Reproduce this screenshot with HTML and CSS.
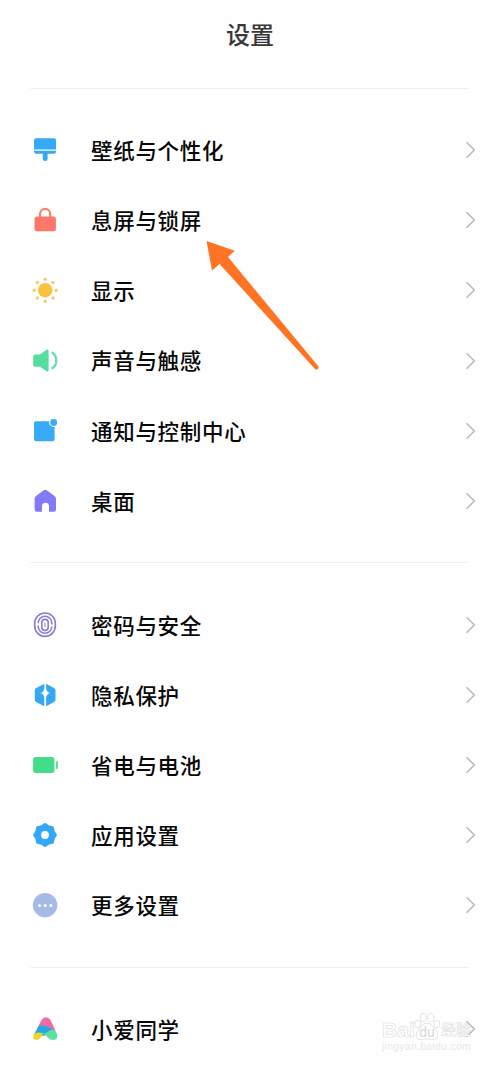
FILE: index.html
```html
<!DOCTYPE html>
<html lang="zh-CN">
<head>
<meta charset="utf-8">
<title>设置</title>
<link rel="stylesheet" href="styles.css">
</head>
<body>
<main class="screen">
  <header class="header"><h1 class="title">设置</h1></header>

  <section class="group">
    <div class="row">
      <svg class="icon" viewBox="0 0 30 30" fill="#35a9f5"><path d="M6 3.3H24Q26 3.3 26 5.3V14.4H4V5.3Q4 3.3 6 3.3Z"/><path d="M4 15.8H26V16.6Q26 18.8 23.8 18.8H17.6V24Q17.6 26 15.2 26T12.8 24V18.8H6.2Q4 18.8 4 16.6Z"/></svg>
      <span class="label">壁纸与个性化</span>
      <svg class="chevron" viewBox="0 0 12 18"><path d="M1.5 1.3L9.3 9L1.5 16.7"/></svg>
    </div>
    <div class="row">
      <svg class="icon" viewBox="0 0 30 30"><path d="M10 13V9.2a5.1 5.3 0 0 1 10.2 0V13" fill="none" stroke="#fb7d6b" stroke-width="2.2"/><rect x="4.5" y="11.4" width="21.4" height="14.8" rx="2.5" fill="#fb7768"/></svg>
      <span class="label">息屏与锁屏</span>
      <svg class="chevron" viewBox="0 0 12 18"><path d="M1.5 1.3L9.3 9L1.5 16.7"/></svg>
    </div>
    <div class="row">
      <svg class="icon" viewBox="0 0 30 30" fill="#fac23c"><circle cx="15.2" cy="15.2" r="7.2"/><g fill="#f5ca6c"><circle cx="15.2" cy="4.2" r="1.7"/><circle cx="15.2" cy="26.2" r="1.7"/><circle cx="4.2" cy="15.2" r="1.7"/><circle cx="26.2" cy="15.2" r="1.7"/><circle cx="7.4" cy="7.4" r="1.7"/><circle cx="23" cy="7.4" r="1.7"/><circle cx="7.4" cy="23" r="1.7"/><circle cx="23" cy="23" r="1.7"/></g></svg>
      <span class="label">显示</span>
      <svg class="chevron" viewBox="0 0 12 18"><path d="M1.5 1.3L9.3 9L1.5 16.7"/></svg>
    </div>
    <div class="row">
      <svg class="icon" viewBox="0 0 30 30"><path d="M5 8.4H10L16.5 3.8Q18.6 2.6 18.6 5V24Q18.6 26.5 16.5 25.2L10 20.8H5Q3.2 20.8 3.2 19V10.2Q3.2 8.4 5 8.4Z" fill="#56dba0"/><path d="M21.7 6.4Q26.3 8.9 26.3 14.5T21.7 22.6" fill="none" stroke="#6cdcaa" stroke-width="2.4"/></svg>
      <span class="label">声音与触感</span>
      <svg class="chevron" viewBox="0 0 12 18"><path d="M1.5 1.3L9.3 9L1.5 16.7"/></svg>
    </div>
    <div class="row">
      <svg class="icon" viewBox="0 0 30 30" fill="#38aaf7"><path d="M6 5.3H19.2A4.7 4.7 0 0 0 24.6 11V23Q24.6 25.2 22.4 25.2H6.2Q4 25.2 4 23V7.3Q4 5.3 6 5.3Z"/><circle cx="23.7" cy="6.5" r="3.4"/></svg>
      <span class="label">通知与控制中心</span>
      <svg class="chevron" viewBox="0 0 12 18"><path d="M1.5 1.3L9.3 9L1.5 16.7"/></svg>
    </div>
    <div class="row">
      <svg class="icon" viewBox="0 0 30 30"><path d="M13.6 4.3Q15.2 3.3 16.8 4.3L24.5 10Q26 11.2 26 13V23.6Q26 25.8 23.8 25.8H19V20.4A3.5 3.7 0 0 0 12 20.4V25.8H6.8Q4.6 25.8 4.6 23.6V13Q4.6 11.2 6 10Z" fill="#837bf5"/></svg>
      <span class="label">桌面</span>
      <svg class="chevron" viewBox="0 0 12 18"><path d="M1.5 1.3L9.3 9L1.5 16.7"/></svg>
    </div>
  </section>

  <section class="group group-second">
    <div class="row">
      <svg class="icon" viewBox="0 0 30 30" fill="none" stroke="#8780d0" stroke-width="1.6"><rect x="4.7" y="3" width="20.6" height="23.4" rx="10.3" stroke-width="1.7"/><path d="M8.2 13.3V13A6.8 6.8 0 0 1 21.8 13V14.5M8.2 15.4V16.4A6.8 6.8 0 0 0 21.8 16.4"/><rect x="11.8" y="9.4" width="6.4" height="11" rx="3.2"/><path d="M15 12.8V17" stroke-width="1"/></svg>
      <span class="label">密码与安全</span>
      <svg class="chevron" viewBox="0 0 12 18"><path d="M1.5 1.3L9.3 9L1.5 16.7"/></svg>
    </div>
    <div class="row">
      <svg class="icon" viewBox="0 0 30 30" fill="#32a9f0"><path d="M14.3 3.7V8.2Q14 12.2 10.2 13Q14 13.8 14.3 18V26.2L6.2 22Q4.8 21.2 4.8 19.6V10.3Q4.8 8.8 6.2 8Z"/><path d="M16.1 3.7L24 8Q25.5 8.8 25.5 10.3V19.6Q25.5 21.2 24 22L16.1 26.2V18Q16.5 13.8 20.3 13Q16.5 12.2 16.1 8.2Z"/></svg>
      <span class="label">隐私保护</span>
      <svg class="chevron" viewBox="0 0 12 18"><path d="M1.5 1.3L9.3 9L1.5 16.7"/></svg>
    </div>
    <div class="row">
      <svg class="icon" viewBox="0 0 30 30" fill="#42dd89"><rect x="3.1" y="7" width="21.3" height="16" rx="2.7"/><path d="M25.9 11H26.7Q28.1 11 28.1 12.5V17.5Q28.1 19 26.7 19H25.9Z" fill="#64dda0"/></svg>
      <span class="label">省电与电池</span>
      <svg class="chevron" viewBox="0 0 12 18"><path d="M1.5 1.3L9.3 9L1.5 16.7"/></svg>
    </div>
    <div class="row">
      <svg class="icon" viewBox="0 0 30 30"><path d="M15 4.6L18.3 6.7L22.4 7.6L23.3 11.7L25.4 15L23.3 18.3L22.4 22.4L18.3 23.3L15 25.4L11.7 23.3L7.6 22.4L6.7 18.3L4.6 15L6.7 11.7L7.6 7.6L11.7 6.7Z" fill="#34a8f5" stroke="#34a8f5" stroke-width="3" stroke-linejoin="round"/><circle cx="15" cy="15" r="3.9" fill="#fff"/></svg>
      <span class="label">应用设置</span>
      <svg class="chevron" viewBox="0 0 12 18"><path d="M1.5 1.3L9.3 9L1.5 16.7"/></svg>
    </div>
    <div class="row">
      <svg class="icon" viewBox="0 0 30 30" fill="#fff"><circle cx="15.1" cy="15.2" r="12.2" fill="#a5bae7"/><circle cx="9.5" cy="15.5" r="1.5"/><circle cx="15.2" cy="15.5" r="1.5"/><circle cx="20.9" cy="15.5" r="1.5"/></svg>
      <span class="label">更多设置</span>
      <svg class="chevron" viewBox="0 0 12 18"><path d="M1.5 1.3L9.3 9L1.5 16.7"/></svg>
    </div>
  </section>

  <section class="group group-last">
    <div class="row">
      <svg class="icon" viewBox="0 0 30 30"><path d="M7.5 14L11.4 6.2Q13 3.2 16 3.2Q19 3.2 20.6 6.2L25.5 16.5L16 17Z" fill="#f06ba6"/><path d="M8.5 12Q12.5 10.2 17 12.4L25 16.5L18 21L11 22L3.8 21Z" fill="#24a9e5"/><path d="M13.2 19.6Q9.5 17.6 5.6 18.9Q3 20.6 3 23Q3.2 25.9 6.6 25.9Q9.6 25.7 11.4 22.6Z" fill="#f0d529"/><path d="M12.6 20Q16.5 19.4 19 17Q21 15.3 23.4 15.4Q25.2 15.8 26.6 19Q28.4 23 26.2 25Q23.6 26.8 20.4 25.6Q18.5 24.8 16.8 22.6Q15 20.2 12.6 20Z" fill="#5fe0a0"/></svg>
      <span class="label">小爱同学</span>
      <svg class="chevron" viewBox="0 0 12 18"><path d="M1.5 1.3L9.3 9L1.5 16.7"/></svg>
    </div>
  </section>

  <svg class="pointer" viewBox="0 0 150 150"><path d="M16.5 11L44.8 20.8L38 27L128.5 136.5Q129 139.5 125.5 139.5L29.5 34L22 40.5Z" fill="#ff7424"/></svg>

  <div class="watermark">
    <div class="brand">
      <span class="brand-name">Bai</span>
      <svg class="paw" viewBox="0 0 28 30"><ellipse cx="4.5" cy="13" rx="3" ry="3.8"/><ellipse cx="10.3" cy="6.5" rx="3" ry="4.2"/><ellipse cx="17.7" cy="6.5" rx="3" ry="4.2"/><ellipse cx="23.8" cy="13" rx="3" ry="3.8"/><path d="M14 12Q18 12 20 16L24 21Q27 28.5 20 28.5L14 27.8L8 28.5Q1 28.5 4 21L8 16Q10 12 14 12Z"/><text x="14" y="26" text-anchor="middle">du</text></svg>
      <span class="brand-cn">经验</span>
    </div>
    <div class="site">jingyan.baidu.com</div>
  </div>
</main>
</body>
</html>
```
FILE: styles.css
```css
* { box-sizing: border-box; }

body {
  margin: 0;
  background: #fefefe;
  font-family: "Noto Sans CJK SC", sans-serif;
  color: #080808;
}

.screen {
  position: relative;
  width: 500px;
  height: 1065px;
  overflow: hidden;
}

.header {
  display: flex;
  justify-content: center;
  height: 88px;
  padding-top: 16px;
}

.title {
  margin: 0;
  font-size: 24px;
  line-height: 36px;
  font-weight: 500;
  color: #383838;
}

.group {
  position: relative;
  padding: 27px 23px 26px 30px;
}

.group::before {
  content: "";
  position: absolute;
  top: 0;
  left: 30px;
  width: 439px;
  height: 1px;
  background: #f0f0f0;
}

.group-second {
  padding-top: 27.5px;
  padding-bottom: 27px;
}

.group-second .row { height: 70px; }

.row {
  display: flex;
  align-items: center;
  height: 70.2px;
}

.icon {
  flex: none;
  width: 30px;
  height: 30px;
}

.label {
  flex: 1;
  margin-left: 31px;
  padding-bottom: 0.4px;
  font-size: 21.5px;
  line-height: 32px;
  letter-spacing: 0.7px;
  font-weight: 500;
}

.group-second .label,
.group-last .label { padding-bottom: 0; }

.chevron {
  flex: none;
  width: 12px;
  height: 18px;
  fill: none;
  stroke: #b8b8b8;
  stroke-width: 1.5;
}

.pointer {
  position: absolute;
  left: 190px;
  top: 230px;
  width: 150px;
  height: 150px;
}

.watermark {
  position: absolute;
  left: 382px;
  top: 1010px;
  width: 92px;
  color: #fff;
  font-family: "Liberation Sans", "Noto Sans CJK SC", sans-serif;
}

.brand {
  display: flex;
  align-items: flex-end;
  height: 31px;
  line-height: 22px;
  font-weight: 700;
}

.brand-name {
  width: 31px;
  font-size: 21px;
  -webkit-text-stroke: 0.6px #dcdcdc;
}

.brand-cn {
  font-size: 15px;
  font-weight: 500;
  -webkit-text-stroke: 0.4px #d4d4d4;
}

.paw {
  flex: none;
  width: 28px;
  height: 30px;
  fill: #fff;
  stroke: #dedede;
  stroke-width: 0.9;
}

.paw text {
  font-size: 14px;
  font-weight: 400;
  fill: #d6d6d6;
  stroke: none;
}

.site {
  font-size: 10px;
  line-height: 12px;
  letter-spacing: 0.5px;
  color: #e8e8e8;
}
```
